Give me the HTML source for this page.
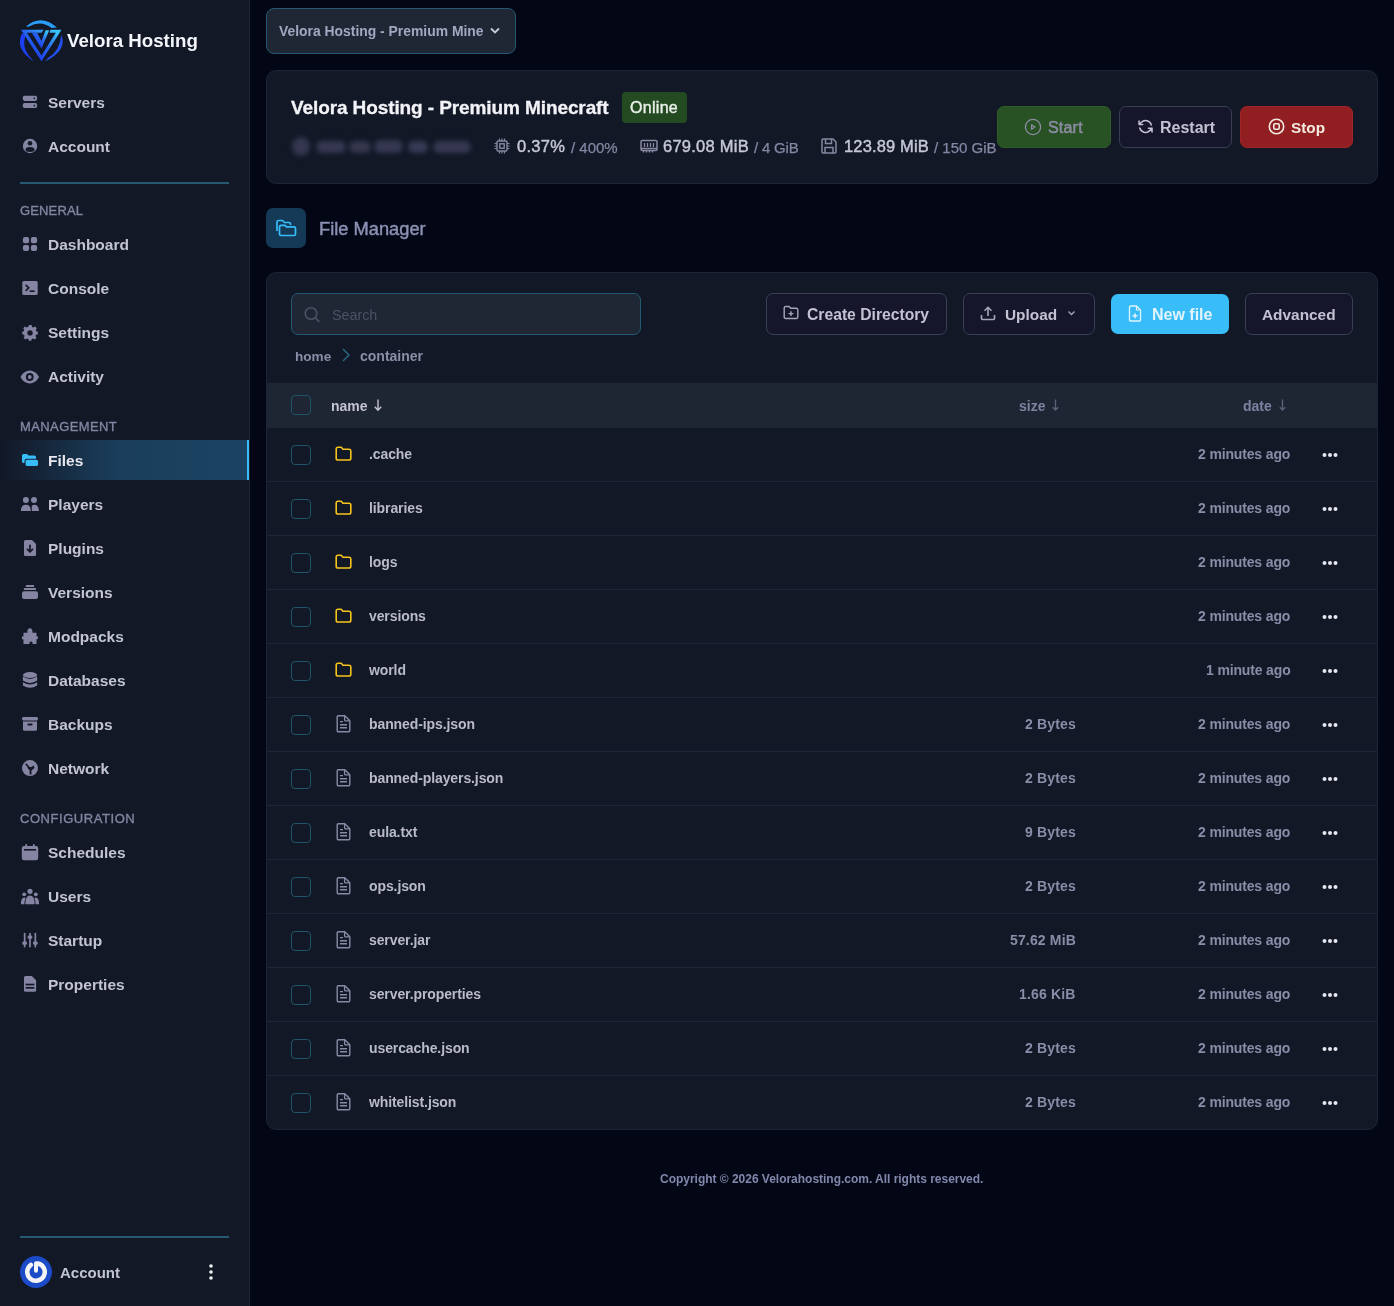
<!DOCTYPE html>
<html><head><meta charset="utf-8"><title>File Manager</title>
<style>
html,body{margin:0;padding:0;width:1394px;height:1306px;overflow:hidden;background:#030615;}
body{position:relative;font-family:"Liberation Sans", sans-serif;}
.t{position:absolute;white-space:pre;will-change:transform;}
.r{position:absolute;}
</style></head><body>
<div class="r" style="left:0px;top:0px;width:249px;height:1306px;background:#121826;"></div>
<div class="r" style="left:249px;top:0px;width:1px;height:1306px;background:#1e2432;"></div>
<svg class="r" style="left:16px;top:16px;overflow:visible;" width="50" height="50" viewBox="0 0 50 50">
<defs><linearGradient id="lg" x1="0.15" y1="0.95" x2="0.9" y2="0.1"><stop offset="0" stop-color="#1b2ff2"/><stop offset="0.55" stop-color="#2563f0"/><stop offset="1" stop-color="#38c4f8"/></linearGradient></defs>
<path d="M10 10.5 Q25 -2.5 41 11.5 L35.5 12 Q25 3.5 12.5 10.8Z" fill="#2a9ef6"/>
<path d="M6.2 17 Q-2 33 18.5 45.8 Q4.5 33 9.5 20Z" fill="#1d3ff2"/>
<path d="M45.2 19 Q52 34 29 45.5 L32 42 Q44 35 45.2 19Z" fill="#2350f0"/>
<path d="M5 13.8 L27.5 13.8 L27.5 14 L25.5 16.8 L10.8 16.8 L25.5 39.5 L39.8 16.8 L33.5 16.8 L34.5 13.8 L45.5 13.8 L25.5 45.2Z" fill="url(#lg)"/>
<path d="M15.8 16.8 L21 16.8 L25.5 25 L29.5 14.2 L33.2 14.2 L25.5 32.5Z" fill="url(#lg)"/>
</svg>
<div class="t" style="left:66.5px;top:29.3px;font-size:18.7px;line-height:23px;font-weight:700;color:#f4f6fb;letter-spacing:0px;">Velora Hosting</div>
<svg class="r" style="left:22px;top:94px;overflow:visible;" width="16" height="16" viewBox="0 0 16 16"><rect x="0.8" y="1.8" width="14.3" height="5.1" rx="1.8" fill="#8585a3"/><rect x="0.8" y="9" width="14.3" height="5.1" rx="1.8" fill="#8585a3"/><circle cx="12.4" cy="4.35" r="0.9" fill="#121826"/><circle cx="12.4" cy="11.55" r="0.9" fill="#121826"/></svg>
<div class="t" style="left:48px;top:93.0px;font-size:15.5px;line-height:19px;font-weight:700;color:#c3c3d3;">Servers</div>
<svg class="r" style="left:22px;top:138px;overflow:visible;" width="16" height="16" viewBox="0 0 16 16"><circle cx="8" cy="8" r="7.2" fill="#8585a3"/><circle cx="8" cy="5.2" r="2.3" fill="#121826"/><ellipse cx="8" cy="11.6" rx="4.5" ry="2.5" fill="#121826"/><path d="M0 13.2 L16 13.2 L16 16 L0 16Z" fill="none"/></svg>
<div class="t" style="left:48px;top:137.0px;font-size:15.5px;line-height:19px;font-weight:700;color:#c3c3d3;">Account</div>
<div class="r" style="left:20px;top:182px;width:209px;height:2px;background:#275a70;"></div>
<div class="t" style="left:20px;top:202.9px;font-size:13px;line-height:16px;font-weight:400;color:#8585a3;letter-spacing:0.15px;-webkit-text-stroke:0.35px #8585a3;">GENERAL</div>
<svg class="r" style="left:22px;top:236px;overflow:visible;" width="16" height="16" viewBox="0 0 16 16"><rect x="0.9" y="1" width="6.2" height="6.2" rx="2" fill="#8585a3"/><rect x="8.9" y="1" width="6.2" height="6.2" rx="2" fill="#8585a3"/><rect x="0.9" y="8.9" width="6.2" height="6.2" rx="2" fill="#8585a3"/><rect x="8.9" y="8.9" width="6.2" height="6.2" rx="2" fill="#8585a3"/></svg>
<div class="t" style="left:48px;top:235.0px;font-size:15.5px;line-height:19px;font-weight:700;color:#c3c3d3;">Dashboard</div>
<svg class="r" style="left:22px;top:280px;overflow:visible;" width="16" height="16" viewBox="0 0 16 16"><rect x="0.3" y="1" width="15.4" height="14" rx="1.6" fill="#8585a3"/><path d="M3.6 4.8 L6.8 7.8 L3.6 10.8" stroke="#121826" stroke-width="1.6" fill="none"/><rect x="7.6" y="10.4" width="5" height="1.6" fill="#121826"/></svg>
<div class="t" style="left:48px;top:279.0px;font-size:15.5px;line-height:19px;font-weight:700;color:#c3c3d3;">Console</div>
<svg class="r" style="left:22px;top:324px;overflow:visible;" width="16" height="16" viewBox="0 0 16 16"><g transform="translate(8 8.9)"><path d="M-1.3 -7.7 L1.3 -7.7 L1.8 -5.6 L3.2 -4.9 L5.1 -6 L6.9 -4.2 L5.8 -2.3 L6.3 -0.9 L8 -0.3 L8 2.3 L6 2.8 L5.4 4.2 L6.5 6.1 L4.7 7.9 L2.8 6.8 L1.4 7.3 L0.9 9.2 L-1.7 9.2 L-2.2 7.3 L-3.6 6.8 L-5.5 7.9 L-7.3 6.1 L-6.2 4.2 L-6.8 2.8 L-8.8 2.3 L-8.8 -0.3 L-7.1 -0.9 L-6.6 -2.3 L-7.7 -4.2 L-5.9 -6 L-4 -4.9 L-2.6 -5.6Z" transform="translate(0.4 -0.75) scale(0.93)" fill="#8585a3"/><circle cx="0" cy="0" r="2.7" fill="#121826"/></g></svg>
<div class="t" style="left:48px;top:323.0px;font-size:15.5px;line-height:19px;font-weight:700;color:#c3c3d3;">Settings</div>
<svg class="r" style="left:22px;top:368px;overflow:visible;" width="16" height="16" viewBox="0 0 16 16"><path d="M7.75 2.5 C12.5 2.5 15.8 6.5 17 9 C15.8 11.5 12.5 15.5 7.75 15.5 C3 15.5 -0.3 11.5 -1.5 9 C-0.3 6.5 3 2.5 7.75 2.5Z" fill="#8585a3"/><circle cx="7.75" cy="9" r="3.9" fill="#121826"/><circle cx="7.75" cy="9" r="1.9" fill="#8585a3"/></svg>
<div class="t" style="left:48px;top:367.0px;font-size:15.5px;line-height:19px;font-weight:700;color:#c3c3d3;">Activity</div>
<div class="t" style="left:20px;top:419.1px;font-size:13px;line-height:16px;font-weight:400;color:#8585a3;letter-spacing:0.4px;-webkit-text-stroke:0.35px #8585a3;">MANAGEMENT</div>
<div class="r" style="left:0px;top:440px;width:247px;height:40px;background:linear-gradient(90deg, rgba(27,58,85,0) 0%, #1a3e5c 48%, #1b4462 100%);"></div>
<div class="r" style="left:247px;top:440px;width:2px;height:40px;background:#38bdf8;"></div>
<svg class="r" style="left:22px;top:452px;overflow:visible;" width="16" height="16" viewBox="0 0 16 16"><path d="M0 3.5 Q0 2 1.5 2 L5 2 L6.5 3.5 L12.5 3.5 Q14 3.5 14 5 L14 6.8 L5 6.8 Q2.5 6.8 2.5 9.3 L2.5 11 L1.5 11 Q0 11 0 9.5Z" fill="#38bdf8"/><rect x="3.6" y="7.7" width="12.4" height="6.3" rx="1.6" fill="#38bdf8"/></svg>
<div class="t" style="left:48px;top:451.0px;font-size:15.5px;line-height:19px;font-weight:700;color:#e6e6ee;">Files</div>
<svg class="r" style="left:22px;top:496px;overflow:visible;" width="16" height="16" viewBox="0 0 16 16"><circle cx="3.9" cy="4" r="3" fill="#8585a3"/><circle cx="12" cy="4" r="3" fill="#8585a3"/><path d="M-1.1 15 Q-1.1 8.8 3.9 8.8 Q8.8 8.8 8.8 15Z" fill="#8585a3"/><path d="M9.8 15 L9.8 10.2 Q10.6 8.8 12 8.8 Q16.9 8.8 16.9 15Z" fill="#8585a3"/></svg>
<div class="t" style="left:48px;top:495.0px;font-size:15.5px;line-height:19px;font-weight:700;color:#c3c3d3;">Players</div>
<svg class="r" style="left:22px;top:540px;overflow:visible;" width="16" height="16" viewBox="0 0 16 16"><path d="M3.5 0 L10 0 L14 4 L14 14.5 Q14 16 12.5 16 L3.5 16 Q2 16 2 14.5 L2 1.5 Q2 0 3.5 0Z" fill="#8585a3"/><path d="M8 4.8 L8 11.8 M5 8.8 L8 11.9 L11 8.8" stroke="#121826" stroke-width="1.7" fill="none"/></svg>
<div class="t" style="left:48px;top:539.0px;font-size:15.5px;line-height:19px;font-weight:700;color:#c3c3d3;">Plugins</div>
<svg class="r" style="left:22px;top:584px;overflow:visible;" width="16" height="16" viewBox="0 0 16 16"><rect x="3.9" y="1" width="8.2" height="2" rx="0.6" fill="#8585a3"/><rect x="1.8" y="3.9" width="12.2" height="2.1" rx="0.8" fill="#8585a3"/><rect x="0" y="7.2" width="16" height="7.7" rx="2" fill="#8585a3"/></svg>
<div class="t" style="left:48px;top:583.0px;font-size:15.5px;line-height:19px;font-weight:700;color:#c3c3d3;">Versions</div>
<svg class="r" style="left:22px;top:628px;overflow:visible;" width="16" height="16" viewBox="0 0 16 16"><path d="M1.5 4.8 L5.4 4.8 Q5 1.8 6.3 0.8 Q8 -0.2 9.5 0.8 Q10.8 1.8 10.4 4.8 L14.5 4.8 L14.5 8.5 Q16 7.8 16 9.8 Q16 11.8 14.5 11 L14.5 16 L10.5 16 Q11 13.4 9 13.4 Q7 13.4 7.5 16 L1.5 16 L1.5 11.4 Q-0.2 11.8 -0.2 9.8 Q-0.2 7.8 1.5 8.3Z" fill="#8585a3"/></svg>
<div class="t" style="left:48px;top:627.0px;font-size:15.5px;line-height:19px;font-weight:700;color:#c3c3d3;">Modpacks</div>
<svg class="r" style="left:22px;top:672px;overflow:visible;" width="16" height="16" viewBox="0 0 16 16"><ellipse cx="8.05" cy="3" rx="7.15" ry="3" fill="#8585a3"/><path d="M0.9 4.6 Q8 9.2 15.2 4.6 L15.2 8.6 Q8 13.2 0.9 8.6Z" fill="#8585a3"/><path d="M0.9 10.2 Q8 14.8 15.2 10.2 L15.2 13.4 Q8 18 0.9 13.4Z" fill="#8585a3"/></svg>
<div class="t" style="left:48px;top:671.0px;font-size:15.5px;line-height:19px;font-weight:700;color:#c3c3d3;">Databases</div>
<svg class="r" style="left:22px;top:716px;overflow:visible;" width="16" height="16" viewBox="0 0 16 16"><rect x="0" y="1" width="16" height="3.6" rx="1.5" fill="#8585a3"/><path d="M1 5.6 L15 5.6 L15 13.3 Q15 14.8 13.5 14.8 L2.5 14.8 Q1 14.8 1 13.3Z" fill="#8585a3"/><rect x="5.5" y="7.6" width="5" height="1.8" rx="0.6" fill="#121826"/></svg>
<div class="t" style="left:48px;top:715.0px;font-size:15.5px;line-height:19px;font-weight:700;color:#c3c3d3;">Backups</div>
<svg class="r" style="left:22px;top:760px;overflow:visible;" width="16" height="16" viewBox="0 0 16 16"><circle cx="8" cy="8.1" r="8" fill="#8585a3"/><path d="M3.2 4.5 Q5.5 6 6.2 9 L7.6 10.2 L7.6 14.5 L9.5 14.5 L9.5 10.5 L12.5 8 L11.8 5.5 L9.8 6.8 Q8.5 7.5 7 6.5 Q5.5 4 4.2 3.3Z" fill="#121826"/></svg>
<div class="t" style="left:48px;top:759.0px;font-size:15.5px;line-height:19px;font-weight:700;color:#c3c3d3;">Network</div>
<div class="t" style="left:20px;top:811.1px;font-size:13px;line-height:16px;font-weight:400;color:#8585a3;letter-spacing:0.55px;-webkit-text-stroke:0.35px #8585a3;">CONFIGURATION</div>
<svg class="r" style="left:22px;top:844px;overflow:visible;" width="16" height="16" viewBox="0 0 16 16"><rect x="-0.2" y="2" width="16.4" height="14.3" rx="2.2" fill="#8585a3"/><rect x="3.3" y="0" width="1.8" height="3.4" rx="0.8" fill="#8585a3"/><rect x="10.9" y="0" width="1.8" height="3.4" rx="0.8" fill="#8585a3"/><rect x="2" y="5" width="12" height="1.6" fill="#121826"/></svg>
<div class="t" style="left:48px;top:843.0px;font-size:15.5px;line-height:19px;font-weight:700;color:#c3c3d3;">Schedules</div>
<svg class="r" style="left:22px;top:888px;overflow:visible;" width="16" height="16" viewBox="0 0 16 16"><circle cx="8" cy="3.3" r="2.6" fill="#8585a3"/><circle cx="2.2" cy="6.3" r="1.9" fill="#8585a3"/><circle cx="13.8" cy="6.3" r="1.9" fill="#8585a3"/><path d="M3.3 16.2 Q3.3 7.6 8 7.6 Q12.7 7.6 12.7 16.2Z" fill="#8585a3"/><path d="M-1.1 16.2 Q-1.1 9.6 2.2 9.6 Q3.2 9.6 3.6 10.2 Q2.4 12.5 2.4 16.2Z" fill="#8585a3"/><path d="M17.1 16.2 Q17.1 9.6 13.8 9.6 Q12.8 9.6 12.4 10.2 Q13.6 12.5 13.6 16.2Z" fill="#8585a3"/></svg>
<div class="t" style="left:48px;top:887.0px;font-size:15.5px;line-height:19px;font-weight:700;color:#c3c3d3;">Users</div>
<svg class="r" style="left:22px;top:932px;overflow:visible;" width="16" height="16" viewBox="0 0 16 16"><rect x="1.8" y="0.7" width="1.7" height="14.9" rx="0.8" fill="#8585a3"/><rect x="7.15" y="0.7" width="1.7" height="14.9" rx="0.8" fill="#8585a3"/><rect x="12.5" y="0.7" width="1.7" height="14.9" rx="0.8" fill="#8585a3"/><rect x="0.3" y="9.6" width="4.7" height="3.2" rx="1.4" fill="#8585a3"/><rect x="5.65" y="3.6" width="4.7" height="3.2" rx="1.4" fill="#8585a3"/><rect x="11" y="9.6" width="4.7" height="3.2" rx="1.4" fill="#8585a3"/></svg>
<div class="t" style="left:48px;top:931.0px;font-size:15.5px;line-height:19px;font-weight:700;color:#c3c3d3;">Startup</div>
<svg class="r" style="left:22px;top:976px;overflow:visible;" width="16" height="16" viewBox="0 0 16 16"><path d="M3.5 -0.1 L9.8 -0.1 L14.1 4.2 L14.1 14.2 Q14.1 15.7 12.6 15.7 L3.5 15.7 Q2 15.7 2 14.2 L2 1.4 Q2 -0.1 3.5 -0.1Z" fill="#8585a3"/><rect x="3.6" y="7.7" width="8.8" height="1.7" fill="#121826"/><rect x="3.6" y="11" width="8.8" height="1.7" fill="#121826"/></svg>
<div class="t" style="left:48px;top:975.0px;font-size:15.5px;line-height:19px;font-weight:700;color:#c3c3d3;">Properties</div>
<div class="r" style="left:20px;top:1236px;width:209px;height:2px;background:#275a70;"></div>
<svg class="r" style="left:20px;top:1256px;overflow:visible;" width="32" height="32" viewBox="0 0 32 32"><circle cx="16" cy="16" r="16" fill="#1c4bc8"/><path d="M17.97 7.47 A8.75 8.75 0 1 1 10.86 8.92" fill="none" stroke="#f4f4f6" stroke-width="4.5" stroke-linecap="round"/><path d="M16 7.2 L16 14.8" stroke="#f4f4f6" stroke-width="4" stroke-linecap="round"/></svg>
<div class="t" style="left:60.3px;top:1263.0px;font-size:15px;line-height:19px;font-weight:700;color:#c3c3d3;">Account</div>
<svg class="r" style="left:207px;top:1263px;overflow:visible;" width="8" height="18" viewBox="0 0 8 18"><circle cx="4" cy="3" r="1.8" fill="#f2f2f6"/><circle cx="4" cy="9" r="1.8" fill="#f2f2f6"/><circle cx="4" cy="15" r="1.8" fill="#f2f2f6"/></svg>
<div class="r" style="left:250px;top:0px;width:1144px;height:1306px;background:#030615;"></div>
<div class="r" style="left:266px;top:8px;width:250px;height:46px;background:#1f2634;border:1px solid #235a72;border-radius:8px;box-sizing:border-box;"></div>
<div class="t" style="left:279px;top:23.0px;font-size:13.9px;line-height:17px;font-weight:700;color:#a2a8c2;">Velora Hosting - Premium Mine</div>
<svg class="r" style="left:489px;top:27px;overflow:visible;" width="12" height="8" viewBox="0 0 12 8"><path d="M2 1.5 L6 5.5 L10 1.5" stroke="#c9cbd8" stroke-width="1.8" fill="none"/></svg>
<div class="r" style="left:266px;top:70px;width:1112px;height:114px;background:#121826;border:1px solid #1d2433;border-radius:10px;box-sizing:border-box;"></div>
<div class="t" style="left:291.4px;top:95.7px;font-size:19px;line-height:24px;font-weight:700;color:#f2f2f7;letter-spacing:-0.1px;-webkit-text-stroke:0.3px #f2f2f7;">Velora Hosting - Premium Minecraft</div>
<div class="r" style="left:622px;top:92px;width:65px;height:31px;background:#244a22;border-radius:4px;"></div>
<div class="t" style="left:630.4px;top:97.5px;font-size:16px;line-height:20px;font-weight:400;color:#eaf0ea;letter-spacing:0.3px;-webkit-text-stroke:0.4px #eaf0ea;">Online</div>
<div class="r" style="left:292px;top:137px;width:18px;height:19px;background:#35374f;border-radius:50%;filter:blur(2.9px);"></div>
<div class="r" style="left:316px;top:141px;width:30px;height:12px;background:#363851;border-radius:7px;filter:blur(2.9px);"></div>
<div class="r" style="left:349px;top:141px;width:22px;height:12px;background:#35374f;border-radius:7px;filter:blur(2.9px);"></div>
<div class="r" style="left:374px;top:140px;width:29px;height:13px;background:#363851;border-radius:7px;filter:blur(2.9px);"></div>
<div class="r" style="left:408px;top:141px;width:20px;height:12px;background:#383a55;border-radius:7px;filter:blur(2.9px);"></div>
<div class="r" style="left:433px;top:141px;width:38px;height:12px;background:#363851;border-radius:7px;filter:blur(2.9px);"></div>
<svg class="r" style="left:494px;top:138px;overflow:visible;" width="16" height="16" viewBox="0 0 16 16"><rect x="3" y="3" width="10" height="10" rx="1.2" fill="none" stroke="#8787a3" stroke-width="1.4"/><rect x="5.8" y="5.8" width="4.4" height="4.4" fill="none" stroke="#8787a3" stroke-width="1.4"/><path d="M5.5 0.5V3 M8 0.5V3 M10.5 0.5V3 M5.5 13V15.5 M8 13V15.5 M10.5 13V15.5 M0.5 5.5H3 M0.5 8H3 M0.5 10.5H3 M13 5.5H15.5 M13 8H15.5 M13 10.5H15.5" stroke="#8787a3" stroke-width="1.2"/></svg>
<div class="t" style="left:516.5px;top:136.4px;font-size:16.5px;line-height:21px;font-weight:400;color:#c6c6d6;letter-spacing:0.3px;-webkit-text-stroke:0.45px #c6c6d6;">0.37%</div>
<div class="t" style="left:570.7px;top:137.9px;font-size:15px;line-height:19px;font-weight:400;color:#8686a4;-webkit-text-stroke:0.25px #8686a4;">/ 400%</div>
<svg class="r" style="left:640px;top:139px;overflow:visible;" width="18" height="14" viewBox="0 0 18 14"><rect x="1" y="1.5" width="16" height="10" rx="1.2" fill="none" stroke="#8787a3" stroke-width="1.5"/><path d="M4.5 4V8 M7.5 4V8 M10.5 4V8 M13.5 4V8 M1 9.5H17 M3.5 11.5V13.5 M6.5 11.5V13.5 M9.5 11.5V13.5 M12.5 11.5V13.5" stroke="#8787a3" stroke-width="1.3"/></svg>
<div class="t" style="left:663.2px;top:136.4px;font-size:16.5px;line-height:21px;font-weight:400;color:#c6c6d6;letter-spacing:0.25px;-webkit-text-stroke:0.45px #c6c6d6;">679.08 MiB</div>
<div class="t" style="left:754.2px;top:137.9px;font-size:15px;line-height:19px;font-weight:400;color:#8686a4;letter-spacing:-0.2px;-webkit-text-stroke:0.25px #8686a4;">/ 4 GiB</div>
<svg class="r" style="left:820px;top:137px;overflow:visible;" width="18" height="18" viewBox="0 0 18 18"><path d="M2 3 Q2 2 3 2 L13 2 L16 5 L16 15 Q16 16 15 16 L3 16 Q2 16 2 15Z" fill="none" stroke="#8787a3" stroke-width="1.5"/><path d="M5.5 2V6.5H11.5V2 M5 16V10.5H13V16" fill="none" stroke="#8787a3" stroke-width="1.5"/></svg>
<div class="t" style="left:843.6px;top:136.4px;font-size:16.5px;line-height:21px;font-weight:400;color:#c6c6d6;letter-spacing:0.15px;-webkit-text-stroke:0.45px #c6c6d6;">123.89 MiB</div>
<div class="t" style="left:933.9px;top:137.9px;font-size:15px;line-height:19px;font-weight:400;color:#8686a4;-webkit-text-stroke:0.25px #8686a4;">/ 150 GiB</div>
<div class="r" style="left:997px;top:106px;width:114px;height:42px;background:#285224;border:1px solid #2f5d2a;border-radius:7px;box-sizing:border-box;"></div>
<svg class="r" style="left:1024px;top:119px;overflow:visible;" width="17" height="17" viewBox="0 0 17 17"><circle cx="9" cy="8" r="7.6" fill="none" stroke="#8c8ca2" stroke-width="1.3"/><path d="M7.6 5.8 L10.9 8 L7.6 10.2Z" fill="none" stroke="#8c8ca2" stroke-width="1.3" stroke-linejoin="round"/></svg>
<div class="t" style="left:1048px;top:117.5px;font-size:16px;line-height:20px;font-weight:400;color:#8c8ca2;letter-spacing:0.2px;-webkit-text-stroke:0.5px #8c8ca2;">Start</div>
<div class="r" style="left:1119px;top:106px;width:113px;height:42px;background:#15162c;border:1px solid #3a3e55;border-radius:7px;box-sizing:border-box;"></div>
<svg class="r" style="left:1137px;top:118px;overflow:visible;" width="17" height="17" viewBox="0 0 17 17"><g transform="translate(17.2 -0.2) scale(-0.72 0.72)"><path d="M16.023 9.348h4.992v-.001M2.985 19.644v-4.992m0 0h4.992m-4.993 0 3.181 3.183a8.25 8.25 0 0 0 13.803-3.7M4.031 9.865a8.25 8.25 0 0 1 13.803-3.7l3.181 3.182m0-4.991v4.99" fill="none" stroke="#c2c2d2" stroke-width="2.1" stroke-linecap="round" stroke-linejoin="round"/></g></svg>
<div class="t" style="left:1160px;top:117.5px;font-size:16px;line-height:20px;font-weight:700;color:#c2c2d2;">Restart</div>
<div class="r" style="left:1240px;top:106px;width:113px;height:42px;background:#911f22;border:1px solid #a12528;border-radius:7px;box-sizing:border-box;"></div>
<svg class="r" style="left:1268px;top:118px;overflow:visible;" width="17" height="17" viewBox="0 0 17 17"><circle cx="8.5" cy="8.5" r="7.2" fill="none" stroke="#f3eadf" stroke-width="1.6"/><rect x="5.8" y="5.8" width="5.4" height="5.4" rx="1.2" fill="none" stroke="#f3eadf" stroke-width="1.6"/></svg>
<div class="t" style="left:1291.2px;top:118.0px;font-size:15.3px;line-height:19px;font-weight:700;color:#f3eadf;">Stop</div>
<div class="r" style="left:266px;top:208px;width:40px;height:40px;background:#143a58;border-radius:7px;"></div>
<svg class="r" style="left:275px;top:219px;overflow:visible;" width="22" height="18" viewBox="0 0 22 18"><path d="M2 12 L2 3 Q2 1.5 3.5 1.5 L7.5 1.5 L9.5 3.5 L14 3.5 Q15.5 3.5 15.5 5 L15.5 6" fill="none" stroke="#38bdf8" stroke-width="1.7"/><path d="M4.5 8 Q4.5 6.3 6.2 6.3 L10 6.3 L11.5 7.8 L19 7.8 Q20.5 7.8 20.5 9.3 L20.5 15 Q20.5 16.5 19 16.5 L6 16.5 Q4.5 16.5 4.5 15Z" fill="none" stroke="#38bdf8" stroke-width="1.7"/></svg>
<div class="t" style="left:318.8px;top:216.9px;font-size:18.3px;line-height:23px;font-weight:400;color:#8c90b2;-webkit-text-stroke:0.45px #8c90b2;">File Manager</div>
<div class="r" style="left:266px;top:272px;width:1112px;height:858px;background:#121826;border:1px solid #1d2433;border-radius:10px;box-sizing:border-box;overflow:hidden;"></div>
<div class="r" style="left:291px;top:293px;width:350px;height:42px;background:#1f2735;border:1px solid #225a72;border-radius:7px;box-sizing:border-box;"></div>
<svg class="r" style="left:303px;top:306px;overflow:visible;" width="19" height="17" viewBox="0 0 19 17"><circle cx="8" cy="7.5" r="5.8" fill="none" stroke="#4b5263" stroke-width="1.6"/><path d="M12.3 11.8 L16.5 16" stroke="#4b5263" stroke-width="1.7"/></svg>
<div class="t" style="left:332.3px;top:305.5px;font-size:14.3px;line-height:18px;font-weight:400;color:#4b5263;">Search</div>
<div class="r" style="left:766px;top:293px;width:181px;height:42px;background:#15162c;border:1px solid #3a3e55;border-radius:7px;box-sizing:border-box;"></div>
<svg class="r" style="left:783px;top:305px;overflow:visible;" width="16" height="15" viewBox="0 0 16 15"><path d="M1.2 3 Q1.2 1.5 2.7 1.5 L6 1.5 L7.8 3.3 L13.3 3.3 Q14.8 3.3 14.8 4.8 L14.8 12 Q14.8 13.5 13.3 13.5 L2.7 13.5 Q1.2 13.5 1.2 12Z" fill="none" stroke="#a5a5b8" stroke-width="1.4"/><path d="M8 6.2V11 M5.6 8.6H10.4" stroke="#a5a5b8" stroke-width="1.4"/></svg>
<div class="t" style="left:807px;top:304.5px;font-size:15.7px;line-height:20px;font-weight:700;color:#c2c2d2;">Create Directory</div>
<div class="r" style="left:963px;top:293px;width:132px;height:42px;background:#15162c;border:1px solid #3a3e55;border-radius:7px;box-sizing:border-box;"></div>
<svg class="r" style="left:980px;top:305px;overflow:visible;" width="16" height="16" viewBox="0 0 16 16"><path d="M8 11V2.5 M4.5 5.8 L8 2.3 L11.5 5.8" fill="none" stroke="#a5a5b8" stroke-width="1.6"/><path d="M1.5 10V13.5 Q1.5 14.5 2.5 14.5 L13.5 14.5 Q14.5 14.5 14.5 13.5 V10" fill="none" stroke="#a5a5b8" stroke-width="1.6"/></svg>
<div class="t" style="left:1004.8px;top:305.0px;font-size:15.4px;line-height:19px;font-weight:700;color:#c2c2d2;">Upload</div>
<svg class="r" style="left:1067px;top:310px;overflow:visible;" width="9" height="6" viewBox="0 0 9 6"><path d="M1.5 1.5 L4.5 4.5 L7.5 1.5" fill="none" stroke="#a5a5b8" stroke-width="1.3"/></svg>
<div class="r" style="left:1111px;top:294px;width:118px;height:40px;background:#38bdf8;border-radius:7px;"></div>
<svg class="r" style="left:1128px;top:305px;overflow:visible;" width="14" height="17" viewBox="0 0 14 17"><path d="M1.5 2 Q1.5 1 2.5 1 L8.5 1 L12.5 5 L12.5 15 Q12.5 16 11.5 16 L2.5 16 Q1.5 16 1.5 15Z" fill="none" stroke="#dff3fb" stroke-width="1.3"/><path d="M8.5 1V5H12.5" fill="none" stroke="#dff3fb" stroke-width="1.2"/><path d="M7 8.3V13.3 M4.5 10.8H9.5" stroke="#dff3fb" stroke-width="1.5"/></svg>
<div class="t" style="left:1151.6px;top:304.5px;font-size:16px;line-height:20px;font-weight:700;color:#e1f3fb;">New file</div>
<div class="r" style="left:1245px;top:293px;width:108px;height:42px;background:#15162c;border:1px solid #3a3e55;border-radius:7px;box-sizing:border-box;"></div>
<div class="t" style="left:1262px;top:305.0px;font-size:15.4px;line-height:19px;font-weight:700;color:#c2c2d2;">Advanced</div>
<div class="t" style="left:295.3px;top:347.5px;font-size:13.6px;line-height:17px;font-weight:700;color:#8a8ea8;">home</div>
<svg class="r" style="left:341px;top:347px;overflow:visible;" width="10" height="16" viewBox="0 0 10 16"><path d="M2 2 L8 8 L2 14" fill="none" stroke="#2c6a88" stroke-width="1.4"/></svg>
<div class="t" style="left:359.9px;top:346.5px;font-size:14px;line-height:18px;font-weight:700;color:#8a8ea8;">container</div>
<div class="r" style="left:267px;top:383px;width:1110px;height:45px;background:#1f2633;"></div>
<div class="r" style="left:291px;top:395px;width:20px;height:20px;border:1.2px solid #1f5468;border-radius:4px;box-sizing:border-box;"></div>
<div class="t" style="left:331.2px;top:396.5px;font-size:14px;line-height:18px;font-weight:700;color:#c3c3d3;">name</div>
<svg class="r" style="left:373px;top:398px;overflow:visible;" width="10" height="14" viewBox="0 0 10 14"><path d="M5 1.5V12 M1.8 8.8 L5 12.2 L8.2 8.8" fill="none" stroke="#c3c3d3" stroke-width="1.4"/></svg>
<div class="t" style="left:1018.7px;top:396.5px;font-size:14px;line-height:18px;font-weight:700;color:#7e82a0;">size</div>
<svg class="r" style="left:1051px;top:398px;overflow:visible;" width="9" height="14" viewBox="0 0 9 14"><path d="M4.5 1.5V12 M1.8 9.2 L4.5 12 L7.2 9.2" fill="none" stroke="#5d6178" stroke-width="1.3"/></svg>
<div class="t" style="left:1243.4px;top:396.5px;font-size:14px;line-height:18px;font-weight:700;color:#7e82a0;">date</div>
<svg class="r" style="left:1278px;top:398px;overflow:visible;" width="9" height="14" viewBox="0 0 9 14"><path d="M4.5 1.5V12 M1.8 9.2 L4.5 12 L7.2 9.2" fill="none" stroke="#5d6178" stroke-width="1.3"/></svg>
<div class="r" style="left:267px;top:481px;width:1110px;height:1px;background:#1f2737;"></div>
<div class="r" style="left:291px;top:445px;width:20px;height:20px;border:1.2px solid #1f5468;border-radius:4px;box-sizing:border-box;"></div>
<svg class="r" style="left:335px;top:446px;overflow:visible;" width="17" height="16" viewBox="0 0 17 16"><path d="M1.2 3 Q1.2 1.2 3 1.2 L6.2 1.2 L8 3.2 L14 3.2 Q15.8 3.2 15.8 5 L15.8 12.2 Q15.8 14 14 14 L3 14 Q1.2 14 1.2 12.2Z" fill="none" stroke="#f6c31c" stroke-width="1.6" stroke-linejoin="round"/></svg>
<div class="t" style="left:369.4px;top:445.0px;font-size:14px;line-height:18px;font-weight:700;color:#babaca;letter-spacing:-0.1px;">.cache</div>
<div class="t" style="right:103.5px;text-align:right;top:445.0px;font-size:14px;line-height:18px;font-weight:700;color:#8a8ca8;letter-spacing:-0.15px;">2 minutes ago</div>
<svg class="r" style="left:1322px;top:451px;overflow:visible;" width="16" height="8" viewBox="0 0 16 8"><circle cx="2.5" cy="4" r="2" fill="#e6e6ee"/><circle cx="8" cy="4" r="2" fill="#e6e6ee"/><circle cx="13.5" cy="4" r="2" fill="#e6e6ee"/></svg>
<div class="r" style="left:267px;top:535px;width:1110px;height:1px;background:#1f2737;"></div>
<div class="r" style="left:291px;top:499px;width:20px;height:20px;border:1.2px solid #1f5468;border-radius:4px;box-sizing:border-box;"></div>
<svg class="r" style="left:335px;top:500px;overflow:visible;" width="17" height="16" viewBox="0 0 17 16"><path d="M1.2 3 Q1.2 1.2 3 1.2 L6.2 1.2 L8 3.2 L14 3.2 Q15.8 3.2 15.8 5 L15.8 12.2 Q15.8 14 14 14 L3 14 Q1.2 14 1.2 12.2Z" fill="none" stroke="#f6c31c" stroke-width="1.6" stroke-linejoin="round"/></svg>
<div class="t" style="left:369.4px;top:499.0px;font-size:14px;line-height:18px;font-weight:700;color:#babaca;letter-spacing:-0.1px;">libraries</div>
<div class="t" style="right:103.5px;text-align:right;top:499.0px;font-size:14px;line-height:18px;font-weight:700;color:#8a8ca8;letter-spacing:-0.15px;">2 minutes ago</div>
<svg class="r" style="left:1322px;top:505px;overflow:visible;" width="16" height="8" viewBox="0 0 16 8"><circle cx="2.5" cy="4" r="2" fill="#e6e6ee"/><circle cx="8" cy="4" r="2" fill="#e6e6ee"/><circle cx="13.5" cy="4" r="2" fill="#e6e6ee"/></svg>
<div class="r" style="left:267px;top:589px;width:1110px;height:1px;background:#1f2737;"></div>
<div class="r" style="left:291px;top:553px;width:20px;height:20px;border:1.2px solid #1f5468;border-radius:4px;box-sizing:border-box;"></div>
<svg class="r" style="left:335px;top:554px;overflow:visible;" width="17" height="16" viewBox="0 0 17 16"><path d="M1.2 3 Q1.2 1.2 3 1.2 L6.2 1.2 L8 3.2 L14 3.2 Q15.8 3.2 15.8 5 L15.8 12.2 Q15.8 14 14 14 L3 14 Q1.2 14 1.2 12.2Z" fill="none" stroke="#f6c31c" stroke-width="1.6" stroke-linejoin="round"/></svg>
<div class="t" style="left:369.4px;top:553.0px;font-size:14px;line-height:18px;font-weight:700;color:#babaca;letter-spacing:-0.1px;">logs</div>
<div class="t" style="right:103.5px;text-align:right;top:553.0px;font-size:14px;line-height:18px;font-weight:700;color:#8a8ca8;letter-spacing:-0.15px;">2 minutes ago</div>
<svg class="r" style="left:1322px;top:559px;overflow:visible;" width="16" height="8" viewBox="0 0 16 8"><circle cx="2.5" cy="4" r="2" fill="#e6e6ee"/><circle cx="8" cy="4" r="2" fill="#e6e6ee"/><circle cx="13.5" cy="4" r="2" fill="#e6e6ee"/></svg>
<div class="r" style="left:267px;top:643px;width:1110px;height:1px;background:#1f2737;"></div>
<div class="r" style="left:291px;top:607px;width:20px;height:20px;border:1.2px solid #1f5468;border-radius:4px;box-sizing:border-box;"></div>
<svg class="r" style="left:335px;top:608px;overflow:visible;" width="17" height="16" viewBox="0 0 17 16"><path d="M1.2 3 Q1.2 1.2 3 1.2 L6.2 1.2 L8 3.2 L14 3.2 Q15.8 3.2 15.8 5 L15.8 12.2 Q15.8 14 14 14 L3 14 Q1.2 14 1.2 12.2Z" fill="none" stroke="#f6c31c" stroke-width="1.6" stroke-linejoin="round"/></svg>
<div class="t" style="left:369.4px;top:607.0px;font-size:14px;line-height:18px;font-weight:700;color:#babaca;letter-spacing:-0.1px;">versions</div>
<div class="t" style="right:103.5px;text-align:right;top:607.0px;font-size:14px;line-height:18px;font-weight:700;color:#8a8ca8;letter-spacing:-0.15px;">2 minutes ago</div>
<svg class="r" style="left:1322px;top:613px;overflow:visible;" width="16" height="8" viewBox="0 0 16 8"><circle cx="2.5" cy="4" r="2" fill="#e6e6ee"/><circle cx="8" cy="4" r="2" fill="#e6e6ee"/><circle cx="13.5" cy="4" r="2" fill="#e6e6ee"/></svg>
<div class="r" style="left:267px;top:697px;width:1110px;height:1px;background:#1f2737;"></div>
<div class="r" style="left:291px;top:661px;width:20px;height:20px;border:1.2px solid #1f5468;border-radius:4px;box-sizing:border-box;"></div>
<svg class="r" style="left:335px;top:662px;overflow:visible;" width="17" height="16" viewBox="0 0 17 16"><path d="M1.2 3 Q1.2 1.2 3 1.2 L6.2 1.2 L8 3.2 L14 3.2 Q15.8 3.2 15.8 5 L15.8 12.2 Q15.8 14 14 14 L3 14 Q1.2 14 1.2 12.2Z" fill="none" stroke="#f6c31c" stroke-width="1.6" stroke-linejoin="round"/></svg>
<div class="t" style="left:369.4px;top:661.0px;font-size:14px;line-height:18px;font-weight:700;color:#babaca;letter-spacing:-0.1px;">world</div>
<div class="t" style="right:103.5px;text-align:right;top:661.0px;font-size:14px;line-height:18px;font-weight:700;color:#8a8ca8;letter-spacing:-0.15px;">1 minute ago</div>
<svg class="r" style="left:1322px;top:667px;overflow:visible;" width="16" height="8" viewBox="0 0 16 8"><circle cx="2.5" cy="4" r="2" fill="#e6e6ee"/><circle cx="8" cy="4" r="2" fill="#e6e6ee"/><circle cx="13.5" cy="4" r="2" fill="#e6e6ee"/></svg>
<div class="r" style="left:267px;top:751px;width:1110px;height:1px;background:#1f2737;"></div>
<div class="r" style="left:291px;top:715px;width:20px;height:20px;border:1.2px solid #1f5468;border-radius:4px;box-sizing:border-box;"></div>
<svg class="r" style="left:336px;top:715px;overflow:visible;" width="15" height="17" viewBox="0 0 15 17"><path d="M1.2 1.9 Q1.2 0.7 2.4 0.7 L8.8 0.7 L13.8 5.7 L13.8 15.6 Q13.8 16.8 12.6 16.8 L2.4 16.8 Q1.2 16.8 1.2 15.6Z" fill="none" stroke="#8a8aa6" stroke-width="1.4" stroke-linejoin="round"/><path d="M8.6 0.9V4.9Q8.6 5.9 9.6 5.9H13.6" fill="none" stroke="#8a8aa6" stroke-width="1.3"/><path d="M4 6.6H7 M4 9.8H11 M4 12.8H11" stroke="#8a8aa6" stroke-width="1.4"/></svg>
<div class="t" style="left:369.4px;top:715.0px;font-size:14px;line-height:18px;font-weight:700;color:#babaca;letter-spacing:-0.1px;">banned-ips.json</div>
<div class="t" style="right:318.5px;text-align:right;top:715.0px;font-size:14px;line-height:18px;font-weight:700;color:#8a8ca8;letter-spacing:0.15px;">2 Bytes</div>
<div class="t" style="right:103.5px;text-align:right;top:715.0px;font-size:14px;line-height:18px;font-weight:700;color:#8a8ca8;letter-spacing:-0.15px;">2 minutes ago</div>
<svg class="r" style="left:1322px;top:721px;overflow:visible;" width="16" height="8" viewBox="0 0 16 8"><circle cx="2.5" cy="4" r="2" fill="#e6e6ee"/><circle cx="8" cy="4" r="2" fill="#e6e6ee"/><circle cx="13.5" cy="4" r="2" fill="#e6e6ee"/></svg>
<div class="r" style="left:267px;top:805px;width:1110px;height:1px;background:#1f2737;"></div>
<div class="r" style="left:291px;top:769px;width:20px;height:20px;border:1.2px solid #1f5468;border-radius:4px;box-sizing:border-box;"></div>
<svg class="r" style="left:336px;top:769px;overflow:visible;" width="15" height="17" viewBox="0 0 15 17"><path d="M1.2 1.9 Q1.2 0.7 2.4 0.7 L8.8 0.7 L13.8 5.7 L13.8 15.6 Q13.8 16.8 12.6 16.8 L2.4 16.8 Q1.2 16.8 1.2 15.6Z" fill="none" stroke="#8a8aa6" stroke-width="1.4" stroke-linejoin="round"/><path d="M8.6 0.9V4.9Q8.6 5.9 9.6 5.9H13.6" fill="none" stroke="#8a8aa6" stroke-width="1.3"/><path d="M4 6.6H7 M4 9.8H11 M4 12.8H11" stroke="#8a8aa6" stroke-width="1.4"/></svg>
<div class="t" style="left:369.4px;top:769.0px;font-size:14px;line-height:18px;font-weight:700;color:#babaca;letter-spacing:-0.1px;">banned-players.json</div>
<div class="t" style="right:318.5px;text-align:right;top:769.0px;font-size:14px;line-height:18px;font-weight:700;color:#8a8ca8;letter-spacing:0.15px;">2 Bytes</div>
<div class="t" style="right:103.5px;text-align:right;top:769.0px;font-size:14px;line-height:18px;font-weight:700;color:#8a8ca8;letter-spacing:-0.15px;">2 minutes ago</div>
<svg class="r" style="left:1322px;top:775px;overflow:visible;" width="16" height="8" viewBox="0 0 16 8"><circle cx="2.5" cy="4" r="2" fill="#e6e6ee"/><circle cx="8" cy="4" r="2" fill="#e6e6ee"/><circle cx="13.5" cy="4" r="2" fill="#e6e6ee"/></svg>
<div class="r" style="left:267px;top:859px;width:1110px;height:1px;background:#1f2737;"></div>
<div class="r" style="left:291px;top:823px;width:20px;height:20px;border:1.2px solid #1f5468;border-radius:4px;box-sizing:border-box;"></div>
<svg class="r" style="left:336px;top:823px;overflow:visible;" width="15" height="17" viewBox="0 0 15 17"><path d="M1.2 1.9 Q1.2 0.7 2.4 0.7 L8.8 0.7 L13.8 5.7 L13.8 15.6 Q13.8 16.8 12.6 16.8 L2.4 16.8 Q1.2 16.8 1.2 15.6Z" fill="none" stroke="#8a8aa6" stroke-width="1.4" stroke-linejoin="round"/><path d="M8.6 0.9V4.9Q8.6 5.9 9.6 5.9H13.6" fill="none" stroke="#8a8aa6" stroke-width="1.3"/><path d="M4 6.6H7 M4 9.8H11 M4 12.8H11" stroke="#8a8aa6" stroke-width="1.4"/></svg>
<div class="t" style="left:369.4px;top:823.0px;font-size:14px;line-height:18px;font-weight:700;color:#babaca;letter-spacing:-0.1px;">eula.txt</div>
<div class="t" style="right:318.5px;text-align:right;top:823.0px;font-size:14px;line-height:18px;font-weight:700;color:#8a8ca8;letter-spacing:0.15px;">9 Bytes</div>
<div class="t" style="right:103.5px;text-align:right;top:823.0px;font-size:14px;line-height:18px;font-weight:700;color:#8a8ca8;letter-spacing:-0.15px;">2 minutes ago</div>
<svg class="r" style="left:1322px;top:829px;overflow:visible;" width="16" height="8" viewBox="0 0 16 8"><circle cx="2.5" cy="4" r="2" fill="#e6e6ee"/><circle cx="8" cy="4" r="2" fill="#e6e6ee"/><circle cx="13.5" cy="4" r="2" fill="#e6e6ee"/></svg>
<div class="r" style="left:267px;top:913px;width:1110px;height:1px;background:#1f2737;"></div>
<div class="r" style="left:291px;top:877px;width:20px;height:20px;border:1.2px solid #1f5468;border-radius:4px;box-sizing:border-box;"></div>
<svg class="r" style="left:336px;top:877px;overflow:visible;" width="15" height="17" viewBox="0 0 15 17"><path d="M1.2 1.9 Q1.2 0.7 2.4 0.7 L8.8 0.7 L13.8 5.7 L13.8 15.6 Q13.8 16.8 12.6 16.8 L2.4 16.8 Q1.2 16.8 1.2 15.6Z" fill="none" stroke="#8a8aa6" stroke-width="1.4" stroke-linejoin="round"/><path d="M8.6 0.9V4.9Q8.6 5.9 9.6 5.9H13.6" fill="none" stroke="#8a8aa6" stroke-width="1.3"/><path d="M4 6.6H7 M4 9.8H11 M4 12.8H11" stroke="#8a8aa6" stroke-width="1.4"/></svg>
<div class="t" style="left:369.4px;top:877.0px;font-size:14px;line-height:18px;font-weight:700;color:#babaca;letter-spacing:-0.1px;">ops.json</div>
<div class="t" style="right:318.5px;text-align:right;top:877.0px;font-size:14px;line-height:18px;font-weight:700;color:#8a8ca8;letter-spacing:0.15px;">2 Bytes</div>
<div class="t" style="right:103.5px;text-align:right;top:877.0px;font-size:14px;line-height:18px;font-weight:700;color:#8a8ca8;letter-spacing:-0.15px;">2 minutes ago</div>
<svg class="r" style="left:1322px;top:883px;overflow:visible;" width="16" height="8" viewBox="0 0 16 8"><circle cx="2.5" cy="4" r="2" fill="#e6e6ee"/><circle cx="8" cy="4" r="2" fill="#e6e6ee"/><circle cx="13.5" cy="4" r="2" fill="#e6e6ee"/></svg>
<div class="r" style="left:267px;top:967px;width:1110px;height:1px;background:#1f2737;"></div>
<div class="r" style="left:291px;top:931px;width:20px;height:20px;border:1.2px solid #1f5468;border-radius:4px;box-sizing:border-box;"></div>
<svg class="r" style="left:336px;top:931px;overflow:visible;" width="15" height="17" viewBox="0 0 15 17"><path d="M1.2 1.9 Q1.2 0.7 2.4 0.7 L8.8 0.7 L13.8 5.7 L13.8 15.6 Q13.8 16.8 12.6 16.8 L2.4 16.8 Q1.2 16.8 1.2 15.6Z" fill="none" stroke="#8a8aa6" stroke-width="1.4" stroke-linejoin="round"/><path d="M8.6 0.9V4.9Q8.6 5.9 9.6 5.9H13.6" fill="none" stroke="#8a8aa6" stroke-width="1.3"/><path d="M4 6.6H7 M4 9.8H11 M4 12.8H11" stroke="#8a8aa6" stroke-width="1.4"/></svg>
<div class="t" style="left:369.4px;top:931.0px;font-size:14px;line-height:18px;font-weight:700;color:#babaca;letter-spacing:-0.1px;">server.jar</div>
<div class="t" style="right:318.5px;text-align:right;top:931.0px;font-size:14px;line-height:18px;font-weight:700;color:#8a8ca8;letter-spacing:0.15px;">57.62 MiB</div>
<div class="t" style="right:103.5px;text-align:right;top:931.0px;font-size:14px;line-height:18px;font-weight:700;color:#8a8ca8;letter-spacing:-0.15px;">2 minutes ago</div>
<svg class="r" style="left:1322px;top:937px;overflow:visible;" width="16" height="8" viewBox="0 0 16 8"><circle cx="2.5" cy="4" r="2" fill="#e6e6ee"/><circle cx="8" cy="4" r="2" fill="#e6e6ee"/><circle cx="13.5" cy="4" r="2" fill="#e6e6ee"/></svg>
<div class="r" style="left:267px;top:1021px;width:1110px;height:1px;background:#1f2737;"></div>
<div class="r" style="left:291px;top:985px;width:20px;height:20px;border:1.2px solid #1f5468;border-radius:4px;box-sizing:border-box;"></div>
<svg class="r" style="left:336px;top:985px;overflow:visible;" width="15" height="17" viewBox="0 0 15 17"><path d="M1.2 1.9 Q1.2 0.7 2.4 0.7 L8.8 0.7 L13.8 5.7 L13.8 15.6 Q13.8 16.8 12.6 16.8 L2.4 16.8 Q1.2 16.8 1.2 15.6Z" fill="none" stroke="#8a8aa6" stroke-width="1.4" stroke-linejoin="round"/><path d="M8.6 0.9V4.9Q8.6 5.9 9.6 5.9H13.6" fill="none" stroke="#8a8aa6" stroke-width="1.3"/><path d="M4 6.6H7 M4 9.8H11 M4 12.8H11" stroke="#8a8aa6" stroke-width="1.4"/></svg>
<div class="t" style="left:369.4px;top:985.0px;font-size:14px;line-height:18px;font-weight:700;color:#babaca;letter-spacing:-0.1px;">server.properties</div>
<div class="t" style="right:318.5px;text-align:right;top:985.0px;font-size:14px;line-height:18px;font-weight:700;color:#8a8ca8;letter-spacing:0.15px;">1.66 KiB</div>
<div class="t" style="right:103.5px;text-align:right;top:985.0px;font-size:14px;line-height:18px;font-weight:700;color:#8a8ca8;letter-spacing:-0.15px;">2 minutes ago</div>
<svg class="r" style="left:1322px;top:991px;overflow:visible;" width="16" height="8" viewBox="0 0 16 8"><circle cx="2.5" cy="4" r="2" fill="#e6e6ee"/><circle cx="8" cy="4" r="2" fill="#e6e6ee"/><circle cx="13.5" cy="4" r="2" fill="#e6e6ee"/></svg>
<div class="r" style="left:267px;top:1075px;width:1110px;height:1px;background:#1f2737;"></div>
<div class="r" style="left:291px;top:1039px;width:20px;height:20px;border:1.2px solid #1f5468;border-radius:4px;box-sizing:border-box;"></div>
<svg class="r" style="left:336px;top:1039px;overflow:visible;" width="15" height="17" viewBox="0 0 15 17"><path d="M1.2 1.9 Q1.2 0.7 2.4 0.7 L8.8 0.7 L13.8 5.7 L13.8 15.6 Q13.8 16.8 12.6 16.8 L2.4 16.8 Q1.2 16.8 1.2 15.6Z" fill="none" stroke="#8a8aa6" stroke-width="1.4" stroke-linejoin="round"/><path d="M8.6 0.9V4.9Q8.6 5.9 9.6 5.9H13.6" fill="none" stroke="#8a8aa6" stroke-width="1.3"/><path d="M4 6.6H7 M4 9.8H11 M4 12.8H11" stroke="#8a8aa6" stroke-width="1.4"/></svg>
<div class="t" style="left:369.4px;top:1039.0px;font-size:14px;line-height:18px;font-weight:700;color:#babaca;letter-spacing:-0.1px;">usercache.json</div>
<div class="t" style="right:318.5px;text-align:right;top:1039.0px;font-size:14px;line-height:18px;font-weight:700;color:#8a8ca8;letter-spacing:0.15px;">2 Bytes</div>
<div class="t" style="right:103.5px;text-align:right;top:1039.0px;font-size:14px;line-height:18px;font-weight:700;color:#8a8ca8;letter-spacing:-0.15px;">2 minutes ago</div>
<svg class="r" style="left:1322px;top:1045px;overflow:visible;" width="16" height="8" viewBox="0 0 16 8"><circle cx="2.5" cy="4" r="2" fill="#e6e6ee"/><circle cx="8" cy="4" r="2" fill="#e6e6ee"/><circle cx="13.5" cy="4" r="2" fill="#e6e6ee"/></svg>
<div class="r" style="left:291px;top:1093px;width:20px;height:20px;border:1.2px solid #1f5468;border-radius:4px;box-sizing:border-box;"></div>
<svg class="r" style="left:336px;top:1093px;overflow:visible;" width="15" height="17" viewBox="0 0 15 17"><path d="M1.2 1.9 Q1.2 0.7 2.4 0.7 L8.8 0.7 L13.8 5.7 L13.8 15.6 Q13.8 16.8 12.6 16.8 L2.4 16.8 Q1.2 16.8 1.2 15.6Z" fill="none" stroke="#8a8aa6" stroke-width="1.4" stroke-linejoin="round"/><path d="M8.6 0.9V4.9Q8.6 5.9 9.6 5.9H13.6" fill="none" stroke="#8a8aa6" stroke-width="1.3"/><path d="M4 6.6H7 M4 9.8H11 M4 12.8H11" stroke="#8a8aa6" stroke-width="1.4"/></svg>
<div class="t" style="left:369.4px;top:1093.0px;font-size:14px;line-height:18px;font-weight:700;color:#babaca;letter-spacing:-0.1px;">whitelist.json</div>
<div class="t" style="right:318.5px;text-align:right;top:1093.0px;font-size:14px;line-height:18px;font-weight:700;color:#8a8ca8;letter-spacing:0.15px;">2 Bytes</div>
<div class="t" style="right:103.5px;text-align:right;top:1093.0px;font-size:14px;line-height:18px;font-weight:700;color:#8a8ca8;letter-spacing:-0.15px;">2 minutes ago</div>
<svg class="r" style="left:1322px;top:1099px;overflow:visible;" width="16" height="8" viewBox="0 0 16 8"><circle cx="2.5" cy="4" r="2" fill="#e6e6ee"/><circle cx="8" cy="4" r="2" fill="#e6e6ee"/><circle cx="13.5" cy="4" r="2" fill="#e6e6ee"/></svg>
<div class="t" style="left:659.8px;top:1171.5px;font-size:12px;line-height:15px;font-weight:700;color:#8288ac;letter-spacing:-0.02px;">Copyright © 2026 Velorahosting.com. All rights reserved.</div>

</body></html>
